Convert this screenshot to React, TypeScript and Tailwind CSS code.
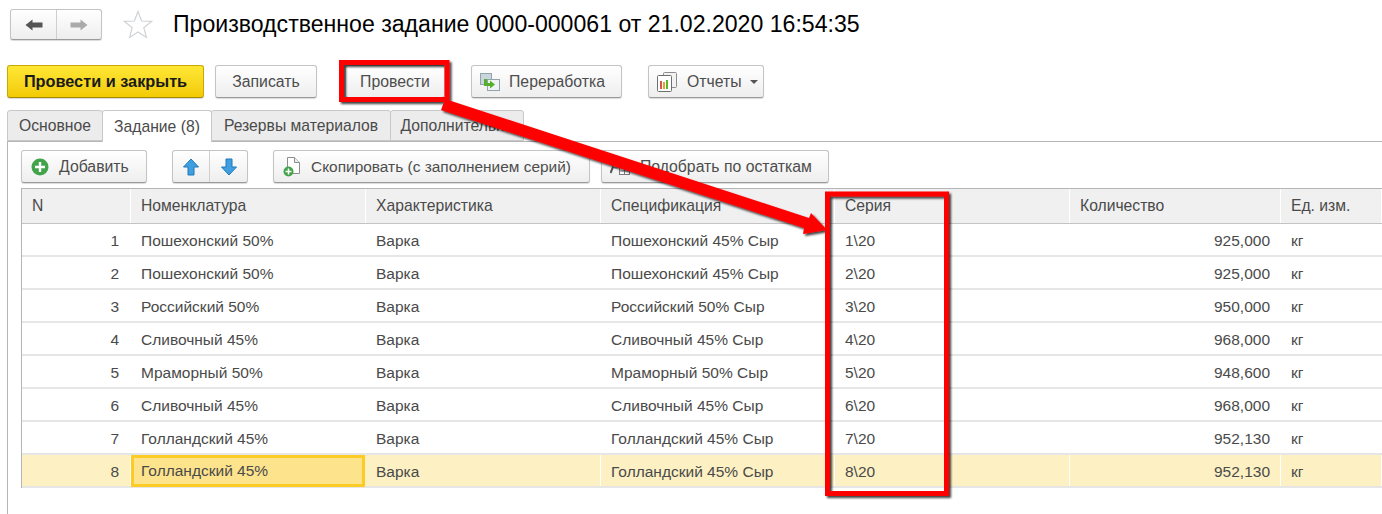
const rows = [
  ["1", "Пошехонский 50%", "Пошехонский 45% Сыр", "1\\20", "925,000"],
  ["2", "Пошехонский 50%", "Пошехонский 45% Сыр", "2\\20", "925,000"],
  ["3", "Российский 50%", "Российский 50% Сыр", "3\\20", "950,000"],
  ["4", "Сливочный 45%", "Сливочный 45% Сыр", "4\\20", "968,000"],
  ["5", "Мраморный 50%", "Мраморный 50% Сыр", "5\\20", "948,600"],
  ["6", "Сливочный 45%", "Сливочный 45% Сыр", "6\\20", "968,000"],
  ["7", "Голландский 45%", "Голландский 45% Сыр", "7\\20", "952,130"],
  ["8", "Голландский 45%", "Голландский 45% Сыр", "8\\20", "952,130"],
];

const columns = "grid grid-cols-[109px_235px_235px_234px_235px_211px_1fr]";
const btn =
  "flex h-[33px] items-center rounded-[3px] border border-[#c4c4c4] border-b-[#9a9a9a] bg-gradient-to-b from-white to-[#eeeeee] shadow-[0_1px_1px_rgba(0,0,0,0.15)] text-[15.8px] text-[#4d4d4d]";

function ArrowLeft({ color }: { color: string }) {
  return (
    <svg width="18" height="12" viewBox="0 0 18 12">
      <path d="M0.5 6 L7.5 0.5 V3.5 H17.5 V8.5 H7.5 V11.5 Z" fill={color} />
    </svg>
  );
}

function ArrowRight({ color }: { color: string }) {
  return (
    <svg width="18" height="12" viewBox="0 0 18 12">
      <path d="M17.5 6 L10.5 0.5 V3.5 H0.5 V8.5 H10.5 V11.5 Z" fill={color} />
    </svg>
  );
}

function Star() {
  return (
    <svg width="30" height="29" viewBox="0 0 30 29">
      <path
        d="M15 1.5 L18.6 11 L28.6 11.4 L20.8 17.7 L23.4 27.4 L15 21.9 L6.6 27.4 L9.2 17.7 L1.4 11.4 L11.4 11 Z"
        fill="#ffffff"
        stroke="#cfd3d6"
        strokeWidth="1.2"
      />
    </svg>
  );
}

function PlusCircle({ size }: { size: number }) {
  return (
    <svg width={size} height={size} viewBox="0 0 18 18">
      <circle cx="9" cy="9" r="8.5" fill="#43a34a" />
      <path d="M9 4 V14 M4 9 H14" stroke="#ffffff" strokeWidth="2.4" />
    </svg>
  );
}

function MoveArrow({ down }: { down?: boolean }) {
  return (
    <svg width="16" height="18" viewBox="0 0 16 18" className={down ? "rotate-180" : ""}>
      <path
        d="M8 1 L15.5 9 H11 V17 H5 V9 H0.5 Z"
        fill="#3f9fe0"
        stroke="#1f78b8"
        strokeWidth="1"
      />
    </svg>
  );
}

function CopyIcon() {
  return (
    <svg width="17" height="20" viewBox="0 0 17 20">
      <path d="M4.5 0.5 H11.5 L16.5 5.5 V16.5 H4.5 Z" fill="#ffffff" stroke="#8d8d8d" />
      <path d="M11.5 0.5 V5.5 H16.5" fill="#ededed" stroke="#8d8d8d" />
      <circle cx="5.5" cy="14.5" r="5" fill="#43a34a" />
      <path d="M5.5 11.5 V17.5 M2.5 14.5 H8.5" stroke="#ffffff" strokeWidth="1.5" />
    </svg>
  );
}

function ProcessIcon() {
  return (
    <svg width="20" height="18" viewBox="0 0 20 18">
      <rect x="0.5" y="0.5" width="11" height="11" fill="#c9d6dc" stroke="#93a3aa" />
      <rect x="7.5" y="6.5" width="12" height="11" fill="#eef2f4" stroke="#93a3aa" />
      <path d="M4 6 H7 V10 H10 V7.5 L15 11.5 L10 15.5 V13 H4 Z" fill="#54b02a" />
    </svg>
  );
}

function ReportIcon() {
  return (
    <svg width="20" height="20" viewBox="0 0 20 20">
      <rect x="6.5" y="0.5" width="13" height="15" rx="1" fill="#f2f2f2" stroke="#8d8d8d" />
      <rect x="0.5" y="3.5" width="14" height="16" rx="1" fill="#ffffff" stroke="#6f6f6f" />
      <rect x="3" y="9" width="2" height="8" fill="#d9534f" />
      <rect x="6" y="10" width="2" height="7" fill="#e5a323" />
      <rect x="9" y="8" width="2" height="9" fill="#5cb531" />
    </svg>
  );
}

function PickIcon() {
  return (
    <svg width="20" height="16" viewBox="0 0 20 16">
      <circle cx="6" cy="5" r="4" fill="#ffffff" stroke="#6f6f6f" strokeWidth="1.2" />
      <path d="M3 8 L0.5 14" stroke="#555555" strokeWidth="2" />
      <rect x="9.5" y="8.5" width="10" height="7" fill="#ffffff" stroke="#7a7a7a" />
      <path d="M9.5 12 H19.5 M14.5 8.5 V15.5" stroke="#7a7a7a" />
    </svg>
  );
}

function Tab({ label, width, active }: { label: string; width: string; active?: boolean }) {
  return (
    <div
      className={`flex items-center justify-center border border-[#c8c8c8] rounded-t-[3px] ${width} ${
        active
          ? "relative z-10 h-[32px] -mb-px border-b-0 bg-white"
          : "h-[31px] -ml-px bg-[#ececec]"
      }`}
    >
      {label}
    </div>
  );
}

function Annotations() {
  return (
    <svg
      width="1382"
      height="514"
      viewBox="0 0 1382 514"
      className="absolute left-0 top-0 z-20 pointer-events-none"
    >
      <defs>
        <filter id="sh" x="-5%" y="-5%" width="110%" height="110%">
          <feDropShadow dx="2" dy="2" stdDeviation="1.2" floodColor="#000000" floodOpacity="0.75" />
        </filter>
      </defs>
      <g filter="url(#sh)">
        <rect x="341.5" y="62.5" width="105.5" height="37" fill="none" stroke="#ff0000" strokeWidth="5" />
        <rect x="827.5" y="194" width="119" height="299.5" fill="none" stroke="#ff0000" strokeWidth="5" />
        <path
          d="M445 99 L441 110 L804 228 L803 234 L827 230 L811 213 L809 218 Z"
          fill="#ff0000"
        />
      </g>
    </svg>
  );
}

export default function App() {
  return (
    <div
      className="relative h-[514px] w-[1382px] overflow-hidden bg-white text-[15.7px] text-[#4a4a4a]"
      style={{ fontFamily: '"Liberation Sans", Arial, sans-serif' }}
    >
      {/* заголовок */}
      <div className="flex h-[65px] items-start pl-[10px] pt-[9px]">
        <div className="flex h-[31px] w-[92px] rounded-[3px] border border-[#c4c4c4] border-b-[#9a9a9a] bg-gradient-to-b from-white to-[#eeeeee] shadow-[0_1px_1px_rgba(0,0,0,0.15)]">
          <div className="flex w-[46px] items-center justify-center border-r border-[#cfcfcf]">
            <ArrowLeft color="#555555" />
          </div>
          <div className="flex flex-1 items-center justify-center">
            <ArrowRight color="#aaaaaa" />
          </div>
        </div>
        <div className="ml-[21px] mt-px">
          <Star />
        </div>
        <h1 className="ml-[20px] text-[23.1px] leading-[30px] font-normal text-black">
          Производственное задание 0000-000061 от 21.02.2020 16:54:35
        </h1>
      </div>

      {/* командная панель */}
      <div className="flex pl-[7px]">
        <div className="flex h-[33px] w-[197px] items-center justify-center rounded-[3px] border border-[#c9a800] border-b-[#a58a00] bg-gradient-to-b from-[#ffe733] to-[#f2cb00] text-[16.3px] font-bold text-[#1a1a1a] shadow-[0_1px_1px_rgba(0,0,0,0.15)]">
          Провести и закрыть
        </div>
        <div className={`${btn} ml-[11px] w-[102px] justify-center`}>Записать</div>
        <div className={`${btn} ml-[28px] w-[100px] justify-center`}>Провести</div>
        <div className={`${btn} ml-[26px] w-[151px] gap-[9px] pl-[8px]`}>
          <ProcessIcon />
          Переработка
        </div>
        <div className={`${btn} ml-[26px] w-[116px] gap-[10px] pl-[8px]`}>
          <ReportIcon />
          Отчеты
          <span className="-ml-[2px] mt-px h-0 w-0 border-x-[4px] border-t-[4px] border-x-transparent border-t-[#555555]" />
        </div>
      </div>

      {/* вкладки */}
      <div className="mt-[12px] flex items-end pl-[7px]">
        <Tab label="Основное" width="w-[96px] !ml-0" />
        <Tab label="Задание (8)" width="w-[110px] -ml-px" active />
        <Tab label="Резервы материалов" width="w-[180px]" />
        <Tab label="Дополнительно" width="w-[134px]" />
      </div>

      <div className="ml-[7px] h-[373px] border-l border-t border-[#b5b5b5] pl-[13px] pt-[8px]">
        {/* панель таблицы */}
        <div className="flex">
          <div className={`${btn} w-[126px] gap-[10px] pl-[9px]`}>
            <PlusCircle size={18} />
            Добавить
          </div>
          <div className={`${btn} ml-[25px] w-[76px]`}>
            <div className="flex h-full w-[37px] items-center justify-center border-r border-[#cfcfcf]">
              <MoveArrow />
            </div>
            <div className="flex flex-1 items-center justify-center">
              <MoveArrow down />
            </div>
          </div>
          <div className={`${btn} ml-[25px] w-[317px] gap-[11px] pl-[9px] !text-[15.45px]`}>
            <CopyIcon />
            Скопировать (с заполнением серий)
          </div>
          <div className={`${btn} ml-[11px] w-[228px] gap-[10px] pl-[8px]`}>
            <PickIcon />
            Подобрать по остаткам
          </div>
        </div>

        {/* таблица */}
        <div className="mt-[5px] border-l border-t border-[#b5b5b5]">
          <div className={`${columns} h-[35px] border-b border-[#c4c4c4] bg-[#f0f0f0]`}>
            {["N", "Номенклатура", "Характеристика", "Спецификация", "Серия", "Количество", "Ед. изм."].map((h) => (
              <div key={h} className="flex items-center border-r border-white pl-[10px]">
                {h}
              </div>
            ))}
          </div>
          {rows.map((r, i) => {
            const selected = i === rows.length - 1;
            const cell = `flex items-center border-r pt-[2px] text-[15.5px] ${selected ? "border-white" : "border-transparent"}`;
            return (
              <div
                key={r[0]}
                className={`${columns} h-[33px] border-b-2 border-[#e6e6e6] ${selected ? "bg-[#fdf1c3]" : "bg-white"}`}
              >
                <div className={`${cell} justify-end pr-[11px]`}>{r[0]}</div>
                {selected ? (
                  <div className="-mb-px mr-px flex items-center border-[3px] border-[#fccb26] bg-[#fde38c] pl-[7px] text-[15.5px]">{r[1]}</div>
                ) : (
                  <div className={`${cell} pl-[10px]`}>{r[1]}</div>
                )}
                <div className={`${cell} pl-[10px]`}>Варка</div>
                <div className={`${cell} pl-[10px]`}>{r[2]}</div>
                <div className={`${cell} pl-[10px]`}>{r[3]}</div>
                <div className={`${cell} justify-end pr-[10px]`}>{r[4]}</div>
                <div className={`${cell} pl-[10px]`}>кг</div>
              </div>
            );
          })}
        </div>
      </div>

      <Annotations />
    </div>
  );
}
